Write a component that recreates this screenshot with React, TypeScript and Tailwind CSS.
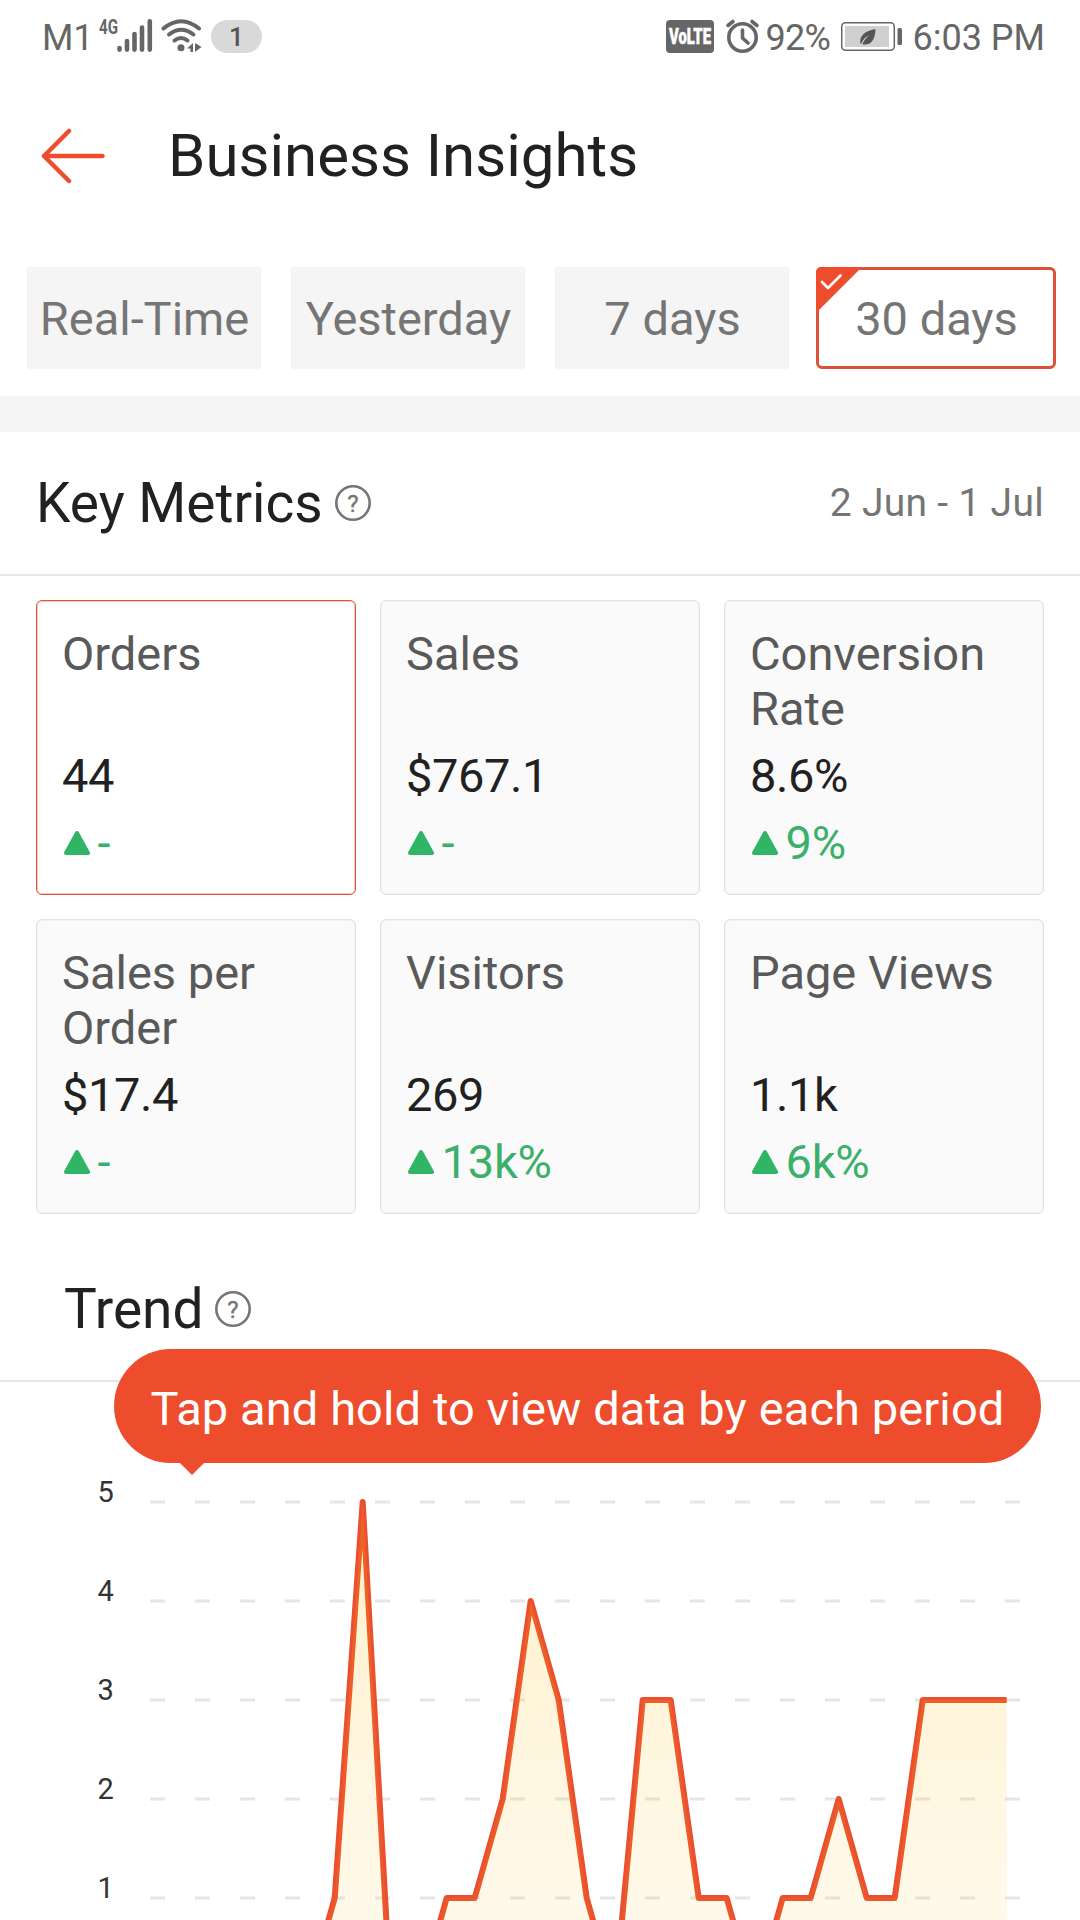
import { clsx } from 'clsx';

interface Metric {
    label: string;
    value: string;
    change: string;
    active?: boolean;
}

const periods = ['Real-Time', 'Yesterday', '7 days', '30 days'];

const metrics: Metric[] = [
    { label: 'Orders', value: '44', change: '-', active: true },
    { label: 'Sales', value: '$767.1', change: '-' },
    { label: 'Conversion Rate', value: '8.6%', change: '9%' },
    { label: 'Sales per Order', value: '$17.4', change: '-' },
    { label: 'Visitors', value: '269', change: '13k%' },
    { label: 'Page Views', value: '1.1k', change: '6k%' },
];

// orders per day, 2 Jun - 1 Jul
const orders = [0, 0, 0, 0, 0, 1, 5, 0, 0, 1, 1, 2, 4, 3, 1, 0, 3, 3, 1, 1, 0, 1, 1, 2, 1, 1, 3, 3, 3, 3];

function StatusBar() {
    return (
        <div className="flex h-[72px] items-center justify-between pl-[42px] pr-[35px] text-[36px] text-[#666]">
            <div className="flex items-center">
                <span className="w-[51px] pt-1 tracking-[-0.3px]">M1</span>
                <svg width="170" height="44" viewBox="93 14 170 44" fill="none">
                    <text x="99" y="34" fontSize="21" fontWeight="700" fill="#666" textLength="19" lengthAdjust="spacingAndGlyphs">4G</text>
                    <g stroke="#666" strokeWidth="4.6" strokeLinecap="round">
                        <path d="M119.5 48v1.6M127 41v8.6M134.5 34v15.6M142 27.5v22.1M149.8 21.3v28.3" />
                    </g>
                    <g stroke="#666" strokeWidth="4" strokeLinecap="round">
                        <path d="M163.5 28.5Q181 14 199 28.5" />
                        <path d="M169 34.5Q181 25 193.5 34.5" />
                        <path d="M174.5 40.5Q181 35.5 187.5 40.5" />
                    </g>
                    <circle cx="181" cy="47.8" r="3.5" fill="#666" />
                    <path d="M187 48.5l6-5.500v9h-2.600v-3.500zM195 43l6.500 4-6.500 5z" fill="#666" />
                    <rect x="211" y="20" width="51" height="33" rx="16.5" fill="#d9d9d9" />
                    <text x="236.5" y="45.5" fontSize="26" fontWeight="500" fill="#555" textAnchor="middle">1</text>
                </svg>
            </div>
            <div className="flex items-center">
                <svg width="94" height="36" viewBox="666 18 94 36" fill="none">
                    <rect x="666" y="20" width="48" height="33" rx="4" fill="#666" />
                    <text x="669" y="44" fontSize="22" fontWeight="900" fill="#fff" stroke="#fff" strokeWidth="0.5" textLength="42" lengthAdjust="spacingAndGlyphs">VoLTE</text>
                    <circle cx="742.5" cy="37.5" r="13.7" stroke="#666" strokeWidth="3.6" />
                    <path d="M742.5 30v8l5.500 5" stroke="#666" strokeWidth="3.6" strokeLinecap="round" strokeLinejoin="round" />
                    <path d="M728 25.500l5-4M757 25.500l-5-4" stroke="#666" strokeWidth="3.6" strokeLinecap="round" />
                </svg>
                <span className="ml-1.5 w-[75px] pt-1 tracking-[-0.7px]">92%</span>
                <svg width="62" height="32" viewBox="841 20 62 32" fill="none">
                    <rect x="841.7" y="22.7" width="52.6" height="27.6" rx="4" stroke="#666" strokeWidth="1.5" />
                    <rect x="845" y="26" width="44" height="21" fill="#d0d0d0" />
                    <path d="M860.5 44c-1.500-7 3-13 15-15-.2 10-4 16.500-12 15.500l-1.200-.4c2-4 4-6.500 7-9-4 2-6.500 4.800-8 8.500z" fill="#555" />
                    <rect x="897.5" y="28" width="4.5" height="17" rx="1.5" fill="#666" />
                </svg>
                <span className="ml-2.5 pt-1">6:03 PM</span>
            </div>
        </div>
    );
}

function HelpIcon() {
    return (
        <svg width="36" height="36" viewBox="0 0 36 36" fill="none">
            <circle cx="18" cy="18" r="16.7" stroke="#757575" strokeWidth="2.6" />
            <text x="18" y="26.5" fontSize="24" fill="#757575" stroke="#757575" strokeWidth="0.4" textAnchor="middle">?</text>
        </svg>
    );
}

function PeriodTab({ label, active }: { label: string; active: boolean }) {
    return (
        <div
            className={clsx(
                'relative flex h-[102px] items-center justify-center text-[47px] text-[#757575]',
                active ? '-ml-[3px] w-60 rounded-md border-[3px] border-[#dd5137] bg-white' : 'w-[234px] rounded-[3px] bg-[#f5f5f5]'
            )}
        >
            {active && (
                <svg className="absolute -left-[3px] -top-[3px]" width="46" height="46" viewBox="0 0 46 46" fill="none">
                    <path d="M0 5a5 5 0 0 1 5-5h41L0 46z" fill="#ee4d2d" />
                    <path d="M6 15l6 6 12.500-12.500" stroke="#fff" strokeWidth="2.6" strokeLinecap="round" strokeLinejoin="round" />
                </svg>
            )}
            <span className="pl-px pt-0.5">{label}</span>
        </div>
    );
}

function MetricCard({ label, value, change, active }: Metric) {
    return (
        <div
            className={clsx(
                'h-[295px] rounded-md border pl-[25px] pr-4 pt-[25px] text-[47px] leading-[55px]',
                active
                    ? 'border-[#d9533a] bg-white inset-ring inset-ring-[#f9c9bf]'
                    : 'border-[#e2e2e2] bg-[#fafafa] inset-ring inset-ring-[#f3f3f3]'
            )}
        >
            <div className="h-[110px] text-[#595959]">{label}</div>
            <div className="mt-3 tracking-[-0.4px] text-[#212121]">{value}</div>
            <div className="mt-3 flex items-center text-[#3bb06a]">
                <svg className="ml-0.5" width="26" height="26" viewBox="0 0 26 26">
                    <path d="M13 3L24 23H2z" fill="#30b566" stroke="#30b566" strokeWidth="4" strokeLinejoin="round" />
                </svg>
                <span className="ml-[7.5px] tracking-[-0.2px]">{change}</span>
            </div>
        </div>
    );
}

function TrendChart() {
    const x = (day: number) => 194.7 + day * 28;
    const y = (count: number) => 615 - count * 99;
    const points = orders.map((count, day) => `${x(day)},${y(count)}`).join(' ');

    return (
        <svg className="block" width="1080" height="538" viewBox="0 0 1080 538" fill="none">
            <defs>
                <linearGradient id="area" gradientUnits="userSpaceOnUse" x1="0" y1="120" x2="0" y2="615">
                    <stop offset="0" stopColor="#ffb700" stopOpacity="0.2" />
                    <stop offset="1" stopColor="#ffb700" stopOpacity="0.06" />
                </linearGradient>
            </defs>
            {[5, 4, 3, 2, 1].map((tick) => (
                <g key={tick}>
                    <text x="97.5" y={y(tick)} fontSize="29" fill="#333">{tick}</text>
                    <line x1="150" x2="1020" y1={y(tick)} y2={y(tick)} stroke="#e6e6e6" strokeWidth="3" strokeDasharray="15 30" />
                </g>
            ))}
            <polyline points={points} stroke="#ea4f2f" strokeWidth="6" strokeLinejoin="round" />
            <polygon points={`${x(0)},615 ${points} ${x(29)},615`} fill="url(#area)" />
        </svg>
    );
}

export default function App() {
    return (
        <div className="h-[1920px] w-[1080px] overflow-hidden bg-white font-[Roboto,sans-serif] text-[#212121]">
            <StatusBar />
            <header className="flex h-[168px] items-center pl-[41px]">
                <svg width="66" height="56" viewBox="0 0 66 56" fill="none" stroke="#ee4d2d" strokeWidth="4.5" strokeLinecap="round" strokeLinejoin="round">
                    <path d="M61.5 28H3M28 3L3 28l25 25" />
                </svg>
                <h1 className="ml-[61px] text-[60px]">Business Insights</h1>
            </header>
            <nav className="flex gap-[30px] pb-[27px] pl-[27px] pt-[27px]">
                {periods.map((period) => (
                    <PeriodTab key={period} label={period} active={period === '30 days'} />
                ))}
            </nav>
            <div className="h-9 bg-[#f5f5f5]" />

            <section>
                <div className="flex h-36 items-center justify-between border-b-2 border-[#e6e6e6] px-9">
                    <div className="flex items-center gap-3">
                        <h2 className="text-[55px]">Key Metrics</h2>
                        <HelpIcon />
                    </div>
                    <span className="text-[39px] tracking-[0.3px] text-[#757575]">2 Jun - 1 Jul</span>
                </div>
                <div className="grid grid-cols-3 gap-6 px-9 py-6">
                    {metrics.map((metric) => (
                        <MetricCard key={metric.label} {...metric} />
                    ))}
                </div>
            </section>

            <section className="relative">
                <div className="flex h-36 items-center gap-[11px] border-b-2 border-[#e6e6e6] pl-16">
                    <h2 className="text-[55px]">Trend</h2>
                    <HelpIcon />
                </div>
                <div className="absolute left-[114px] top-[111px] flex h-[114px] w-[927px] items-center justify-center rounded-full bg-[#ee4d2d] pt-1.5 text-[47px] tracking-[0.1px] text-white">
                    Tap and hold to view data by each period
                    <svg className="absolute left-[64.5px] top-[113px]" width="26" height="13" viewBox="0 0 26 13">
                        <path d="M0 0h26L13 13z" fill="#ee4d2d" />
                    </svg>
                </div>
                <TrendChart />
            </section>
        </div>
    );
}
